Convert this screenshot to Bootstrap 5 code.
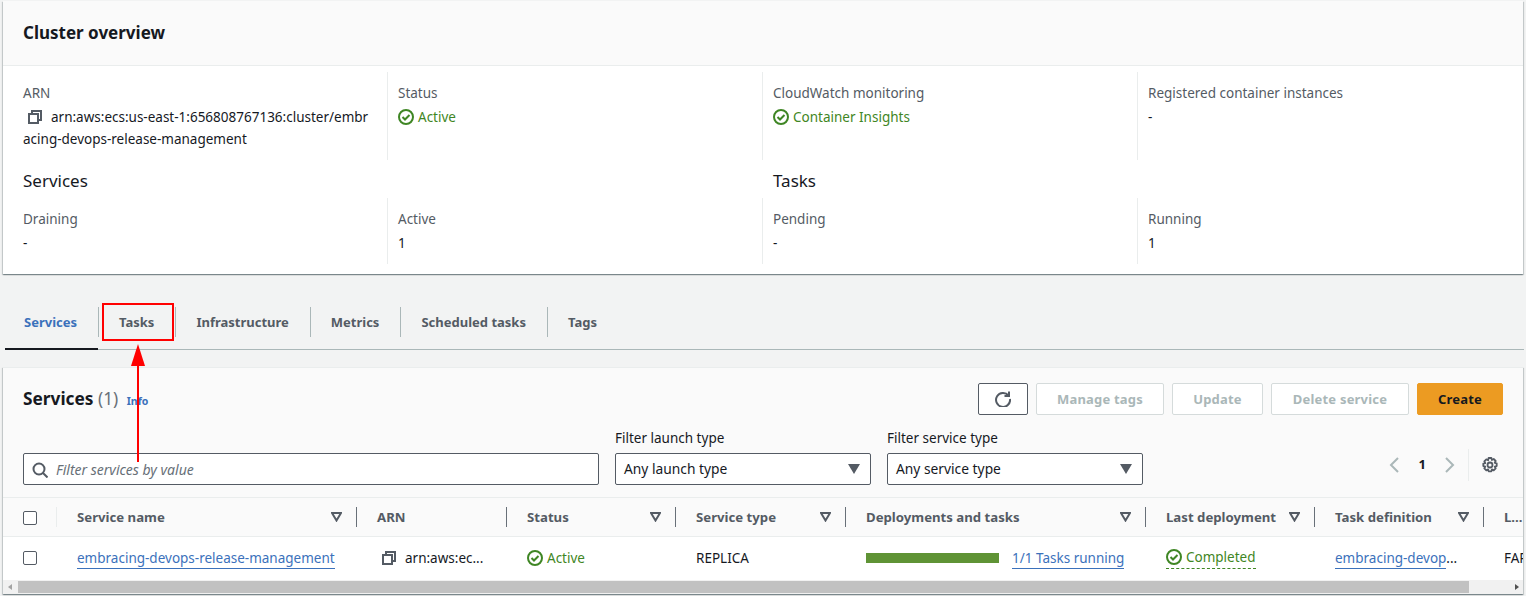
<!DOCTYPE html>
<html>
<head>
  <meta charset="utf-8">
  <meta name="viewport" content="width=device-width">
  <title>Cluster overview</title>
  <link href="https://cdn.jsdelivr.net/npm/bootstrap@5.3.3/dist/css/bootstrap.min.css" rel="stylesheet" type="text/css" />
  <style>
    html, body { height: 596px; overflow: hidden; }
    body { background: #f2f3f3; font-family: "Noto Sans", "Open Sans", sans-serif; font-size: 13.5px; color: #16191f; position: relative; }
    .panel { background: #fff; margin: 1px 3px 0; box-shadow: 0 1px 1px 0 rgba(0,28,36,.3), 1px 1px 1px 0 rgba(0,28,36,.15), -1px 1px 1px 0 rgba(0,28,36,.15); }
    .panel-top { height: 65px; background: #fafafa; border-bottom: 1px solid #eaeded; padding: 0 20px; }
    .panel-top h2 { font-size: 17px; font-weight: 700; margin: 0; line-height: 63px; color: #16191f; }
    .overview { height: 208px; padding: 6px 0 0; }
    .kv-row { display: grid; grid-template-columns: repeat(4, 375px); padding-left: 10px; }
    .kv { padding: 0 14px 0 10px; border-right: 1px solid #eaeded; }
    .kv:last-child { border-right: 0; }
    .kv-lg { height: 88px; }
    .kv-sm { height: 66px; }
    .kv-label { color: #545b64; line-height: 20px; padding-top: 11px; height: 31px; }
    .kv-value { line-height: 22px; margin-top: 3px; word-break: break-all; }
    .copy-gap { margin: 0 9px 0 5px; vertical-align: -2px; }
    .ok-text { color: #3f8624; }
    .ok-icon { vertical-align: -3px; margin-right: 4px; }
    .sub-heads { display: grid; grid-template-columns: 750px 750px; padding-left: 20px; height: 38px; }
    .sub-heads h3 { font-size: 17px; font-weight: 400; margin: 0; line-height: 42px; color: #16191f; }
    .tabbar { margin: 29px 2px 0 5px; height: 47px; border-bottom: 1px solid #aab7b8; display: flex; align-items: flex-start; }
    .tab-item { height: 47px; display: flex; align-items: center; font-weight: 700; color: #545b64; padding: 0 21px 8px; position: relative; font-size: 13px; }
    .tab-item + .tab-item::before { content: ""; position: absolute; left: 0; top: 4px; height: 30px; width: 1px; background: #aab7b8; }
    .tab-active { color: #3b71bb; border-bottom: 2px solid #16191f; padding: 0 20px 6px 19px; width: 93px; }
    .services { height: 227px; margin-top: 17px; background: #fafafa; border-top: 1px solid #eaeded; }
    .svc-head { padding: 15px 20px 0; height: 60px; }
    .svc-title { font-size: 17.3px; font-weight: 700; line-height: 32px; }
    .svc-title span { font-weight: 400; color: #687078; }
    .svc-title a { font-size: 10.5px; font-weight: 700; color: #3b71bb; text-decoration: none; margin-left: 4px; }
    .aws-btn { height: 32px; border: 1px solid #d5dbdb; border-radius: 2px; background: #fff; color: #aab7b8; font-weight: 700; font-size: 13px; padding: 2px 0 0; display: flex; align-items: center; justify-content: center; letter-spacing: .2px; }
    .btn-refresh { width: 50px; border-color: #545b64; padding: 0; }
    .btn-tags { width: 128px; }
    .btn-update { width: 91px; }
    .btn-delete { width: 138px; }
    .btn-create { width: 86px; background: #ec9b22; border-color: #ec9b22; color: #16191f; }
    .filters { padding: 0 20px; height: 69px; display: flex; align-items: flex-start; }
    .filter-label { line-height: 20px; height: 20px; color: #16191f; }
    .search-box, .select-box { height: 32px; border: 1px solid #545b64; border-radius: 2px; background: #fff; display: flex; align-items: center; margin-top: 5px; }
    .search-box { width: 576px; margin-top: 25px; padding: 1px 0 0 8px; color: #687078; font-style: italic; font-size: 14px; }
    .search-box svg { margin-right: 8px; }
    .select-box { padding: 0 10px 0 8px; justify-content: space-between; font-size: 13.8px; }
    .sel-a { width: 256px; }
    .pager { margin-left: auto; height: 32px; margin-top: 21px; padding-right: 5px; display: flex; align-items: center; }
    .pager b { font-size: 13px; margin: 0 19px 0 20px; }
    .prefs { border-left: 1px solid #eaeded; height: 32px; margin-left: 13px; padding-left: 13px; display: flex; align-items: center; }
    .svc-table { table-layout: fixed; width: 1520px; margin: 0; border-collapse: collapse; }
    .svc-table th { height: 39px; background: #fafafa; border-top: 1px solid #eaeded; border-bottom: 1px solid #eaeded; padding: 1px 0 0 20px; font-weight: 700; color: #545b64; font-size: 13.2px; position: relative; white-space: nowrap; }
    .svc-table th + th::before { content: ""; position: absolute; left: -1px; top: 9px; height: 20px; width: 1px; background: #687078; }
    .svc-table th:nth-child(2)::before { background: #eaeded; }
    .svc-table td { height: 43px; background: #fff; padding: 0 0 0 20px; white-space: nowrap; overflow: hidden; vertical-align: middle; }
    .sort-tri { position: absolute; right: 15px; top: 14px; }
    .box-check { display: block; width: 14px; height: 14px; border: 1px solid #545b64; border-radius: 2px; background: #fff; }
    .link-line { color: #3b71bb; text-decoration: none; border-bottom: 1px solid #3b71bb; padding-bottom: 1px; }
    .bar-fill { display: inline-block; width: 133px; height: 10px; background: #5f9335; margin-right: 13px; }
    .dash-line { color: #3f8624; border-bottom: 1px dashed #3f8624; padding-bottom: 3px; display: inline-block; line-height: 16px; }
    .hscroll { height: 14px; background: #f1f1f1; display: flex; align-items: center; position: relative; }
    .hscroll-thumb { margin-left: 15px; width: 1451px; height: 12px; background: #c1c1c1; }
    .arrow-l, .arrow-r { width: 0; height: 0; border-top: 3px solid transparent; border-bottom: 3px solid transparent; position: absolute; }
    .arrow-l { left: 5px; border-right: 4px solid #a3a3a3; }
    .arrow-r { right: 4px; border-left: 4px solid #505050; }
    .mark-box { position: absolute; left: 102px; top: 303px; width: 72px; height: 38px; border: 2px solid #f00; }
    .mark-arrow { position: absolute; left: 130px; top: 344px; }
  </style>
</head>
<body>
  <section class="panel">
    <div class="panel-top"><h2>Cluster overview</h2></div>
    <div class="overview">
      <div class="kv-row">
        <div class="kv kv-lg">
          <div class="kv-label">ARN</div>
          <div class="kv-value"><svg class="copy-gap" width="14" height="14" viewBox="0 0 14 14" fill="none" stroke="#545b64" stroke-width="2"><path d="M4 4V1h9v9h-3"/><rect x="1" y="4" width="9" height="9"/></svg>arn:aws:ecs:us-east-1:656808767136:cluster/embracing-devops-release-management</div>
        </div>
        <div class="kv kv-lg">
          <div class="kv-label">Status</div>
          <div class="kv-value ok-text"><svg class="ok-icon" width="16" height="16" viewBox="0 0 16 16" fill="none" stroke="#3f8624" stroke-width="2"><circle cx="8" cy="8" r="7"/><path d="M4.500 8l2.500 2.500 4.500-4.500"/></svg>Active</div>
        </div>
        <div class="kv kv-lg">
          <div class="kv-label">CloudWatch monitoring</div>
          <div class="kv-value ok-text"><svg class="ok-icon" width="16" height="16" viewBox="0 0 16 16" fill="none" stroke="#3f8624" stroke-width="2"><circle cx="8" cy="8" r="7"/><path d="M4.500 8l2.500 2.500 4.500-4.500"/></svg>Container Insights</div>
        </div>
        <div class="kv kv-lg">
          <div class="kv-label">Registered container instances</div>
          <div class="kv-value">-</div>
        </div>
      </div>
      <div class="sub-heads"><h3>Services</h3><h3>Tasks</h3></div>
      <div class="kv-row">
        <div class="kv kv-sm"><div class="kv-label">Draining</div><div class="kv-value">-</div></div>
        <div class="kv kv-sm"><div class="kv-label">Active</div><div class="kv-value">1</div></div>
        <div class="kv kv-sm"><div class="kv-label">Pending</div><div class="kv-value">-</div></div>
        <div class="kv kv-sm"><div class="kv-label">Running</div><div class="kv-value">1</div></div>
      </div>
    </div>
  </section>

  <nav class="tabbar">
    <div class="tab-item tab-active">Services</div>
    <div class="tab-item">Tasks</div>
    <div class="tab-item">Infrastructure</div>
    <div class="tab-item">Metrics</div>
    <div class="tab-item">Scheduled tasks</div>
    <div class="tab-item">Tags</div>
  </nav>

  <section class="panel services">
    <div class="svc-head d-flex justify-content-between align-items-start">
      <div class="svc-title">Services <span>(1)</span> <a href="#">Info</a></div>
      <div class="d-flex gap-2">
        <button class="aws-btn btn-refresh" type="button"><svg width="16" height="16" viewBox="0 0 16 16" fill="none" stroke="#545b64" stroke-width="2"><path d="M13.500 4.500A7 7 0 1 0 15 8"/><path d="M14 0.500V5H9.500"/></svg></button>
        <button class="aws-btn btn-tags" type="button">Manage tags</button>
        <button class="aws-btn btn-update" type="button">Update</button>
        <button class="aws-btn btn-delete" type="button">Delete service</button>
        <button class="aws-btn btn-create" type="button">Create</button>
      </div>
    </div>
    <div class="filters">
      <div class="search-box"><svg width="16" height="16" viewBox="0 0 16 16" fill="none" stroke="#545b64" stroke-width="2"><circle cx="7" cy="7" r="5.500"/><path d="M11 11l4.500 4.500"/></svg>Filter services by value</div>
      <div class="ms-3">
        <div class="filter-label">Filter launch type</div>
        <div class="select-box sel-a">Any launch type <svg width="12" height="10" viewBox="0 0 12 10"><path d="M0 0h12L6 10z" fill="#545b64"/></svg></div>
      </div>
      <div class="ms-3">
        <div class="filter-label">Filter service type</div>
        <div class="select-box sel-a">Any service type <svg width="12" height="10" viewBox="0 0 12 10"><path d="M0 0h12L6 10z" fill="#545b64"/></svg></div>
      </div>
      <div class="pager">
        <svg width="10" height="16" viewBox="0 0 10 16" fill="none" stroke="#aab7b8" stroke-width="2"><path d="M9 1L2 8l7 7"/></svg>
        <b>1</b>
        <svg width="10" height="16" viewBox="0 0 10 16" fill="none" stroke="#aab7b8" stroke-width="2"><path d="M1 1l7 7-7 7"/></svg>
        <div class="prefs"><svg width="16" height="16" viewBox="0 0 16 16" fill="none" stroke="#545b64" stroke-width="1.800"><circle cx="8" cy="8" r="2.500"/><path d="M6.600 1h2.800l.5 2 1.800-1 2 2-1 1.800 2 .5v2.800l-2 .5 1 1.800-2 2-1.800-1-.5 2H6.600l-.5-2-1.800 1-2-2 1-1.800-2-.5V6.600l2-.5-1-1.800 2-2 1.800 1z" stroke-linejoin="round"/></svg></div>
      </div>
    </div>
    <table class="svc-table">
      <colgroup>
        <col style="width:54px"><col style="width:300px"><col style="width:150px"><col style="width:169px"><col style="width:170px"><col style="width:300px"><col style="width:169px"><col style="width:169px"><col style="width:39px">
      </colgroup>
      <thead>
        <tr>
          <th><span class="box-check"></span></th>
          <th>Service name<svg class="sort-tri" width="11" height="10" viewBox="0 0 11 10"><path d="M1 1h9L5.500 8.500z" fill="none" stroke="#545b64" stroke-width="2"/></svg></th>
          <th>ARN</th>
          <th>Status<svg class="sort-tri" width="11" height="10" viewBox="0 0 11 10"><path d="M1 1h9L5.500 8.500z" fill="none" stroke="#545b64" stroke-width="2"/></svg></th>
          <th>Service type<svg class="sort-tri" width="11" height="10" viewBox="0 0 11 10"><path d="M1 1h9L5.500 8.500z" fill="none" stroke="#545b64" stroke-width="2"/></svg></th>
          <th>Deployments and tasks<svg class="sort-tri" width="11" height="10" viewBox="0 0 11 10"><path d="M1 1h9L5.500 8.500z" fill="none" stroke="#545b64" stroke-width="2"/></svg></th>
          <th>Last deployment<svg class="sort-tri" width="11" height="10" viewBox="0 0 11 10"><path d="M1 1h9L5.500 8.500z" fill="none" stroke="#545b64" stroke-width="2"/></svg></th>
          <th>Task definition<svg class="sort-tri" width="11" height="10" viewBox="0 0 11 10"><path d="M1 1h9L5.500 8.500z" fill="none" stroke="#545b64" stroke-width="2"/></svg></th>
          <th>L...</th>
        </tr>
      </thead>
      <tbody>
        <tr>
          <td><span class="box-check"></span></td>
          <td><a class="link-line" href="#">embracing-devops-release-management</a></td>
          <td><svg class="copy-gap" width="14" height="14" viewBox="0 0 14 14" fill="none" stroke="#545b64" stroke-width="2"><path d="M4 4V1h9v9h-3"/><rect x="1" y="4" width="9" height="9"/></svg>arn:aws:ec...</td>
          <td class="ok-text"><svg class="ok-icon" width="16" height="16" viewBox="0 0 16 16" fill="none" stroke="#3f8624" stroke-width="2"><circle cx="8" cy="8" r="7"/><path d="M4.500 8l2.500 2.500 4.500-4.500"/></svg>Active</td>
          <td>REPLICA</td>
          <td><span class="bar-fill"></span><a class="link-line" href="#">1/1 Tasks running</a></td>
          <td><span class="dash-line"><svg class="ok-icon" width="16" height="16" viewBox="0 0 16 16" fill="none" stroke="#3f8624" stroke-width="2"><circle cx="8" cy="8" r="7"/><path d="M4.500 8l2.500 2.500 4.500-4.500"/></svg>Completed</span></td>
          <td><a class="link-line" href="#">embracing-devop</a>...</td>
          <td>FARGATE</td>
        </tr>
      </tbody>
    </table>
    <div class="hscroll"><span class="arrow-l"></span><div class="hscroll-thumb"></div><span class="arrow-r"></span></div>
  </section>

  <div class="mark-box"></div>
  <svg class="mark-arrow" width="16" height="119" viewBox="0 0 16 119"><path d="M8 14V118" stroke="#f00" stroke-width="2"/><path d="M8 0L15 22H1z" fill="#f00"/></svg>
</body>
</html>
